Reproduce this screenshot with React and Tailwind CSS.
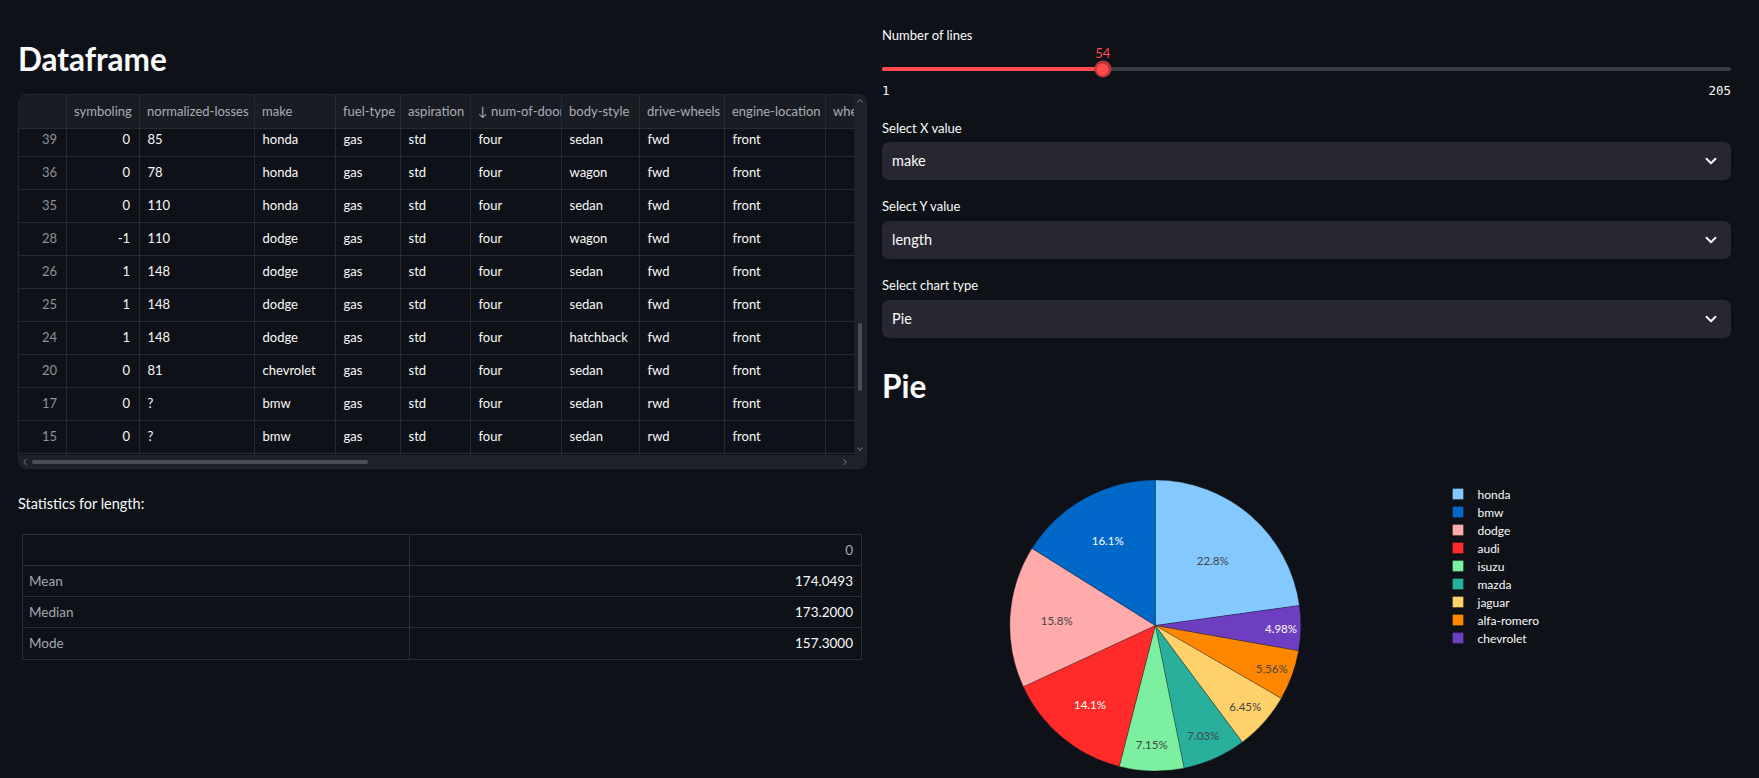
import React from "react";
import { ChevronDown, ChevronUp, ChevronLeft, ChevronRight } from "lucide-react";

const cols = [
  { label: "", w: "w-[48px]", num: true },
  { label: "symboling", w: "w-[73px]", num: true },
  { label: "normalized-losses", w: "w-[115px]" },
  { label: "make", w: "w-[81px]" },
  { label: "fuel-type", w: "w-[65px]" },
  { label: "aspiration", w: "w-[70px]" },
  { label: "↓ num-of-doors", w: "w-[91px]" },
  { label: "body-style", w: "w-[78px]" },
  { label: "drive-wheels", w: "w-[85px]" },
  { label: "engine-location", w: "w-[101px]" },
  { label: "wheel-base", w: "w-[100px]" },
];

const rows = [
  ["39", "0", "85", "honda", "gas", "std", "four", "sedan", "fwd", "front", ""],
  ["36", "0", "78", "honda", "gas", "std", "four", "wagon", "fwd", "front", ""],
  ["35", "0", "110", "honda", "gas", "std", "four", "sedan", "fwd", "front", ""],
  ["28", "-1", "110", "dodge", "gas", "std", "four", "wagon", "fwd", "front", ""],
  ["26", "1", "148", "dodge", "gas", "std", "four", "sedan", "fwd", "front", ""],
  ["25", "1", "148", "dodge", "gas", "std", "four", "sedan", "fwd", "front", ""],
  ["24", "1", "148", "dodge", "gas", "std", "four", "hatchback", "fwd", "front", ""],
  ["20", "0", "81", "chevrolet", "gas", "std", "four", "sedan", "fwd", "front", ""],
  ["17", "0", "?", "bmw", "gas", "std", "four", "sedan", "rwd", "front", ""],
  ["15", "0", "?", "bmw", "gas", "std", "four", "sedan", "rwd", "front", ""],
  ["", "", "", "", "", "", "", "", "", "", ""],
];

const slices = [
  { name: "honda", v: 22.8, c: "#83c9ff", t: "#444", p: [330.7, 154.3], label: "22.8%" },
  { name: "chevrolet", v: 4.98, c: "#6d3fc0", t: "#ffffff", p: [399, 222], label: "4.98%" },
  { name: "alfa-romero", v: 5.56, c: "#ff8700", t: "#444", p: [389.7, 262.3], label: "5.56%" },
  { name: "jaguar", v: 6.45, c: "#ffd16a", t: "#444", p: [363.3, 300.3], label: "6.45%" },
  { name: "mazda", v: 7.03, c: "#29b09d", t: "#444", p: [321.3, 329.7], label: "7.03%" },
  { name: "isuzu", v: 7.15, c: "#7defa1", t: "#444", p: [269.7, 338.7], label: "7.15%" },
  { name: "audi", v: 14.1, c: "#ff2b2b", t: "#ffffff", p: [208, 298.7], label: "14.1%" },
  { name: "dodge", v: 15.8, c: "#ffabab", t: "#444", p: [174.7, 214.3], label: "15.8%" },
  { name: "bmw", v: 16.1, c: "#0068c9", t: "#ffffff", p: [225.7, 134.7], label: "16.1%" },
];

const legend = ["honda", "bmw", "dodge", "audi", "isuzu", "mazda", "jaguar", "alfa-romero", "chevrolet"];

function PieChart() {
  const cx = 273.3;
  const cy = 219.5;
  const r = 145.5;
  const total = slices.reduce((s, x) => s + x.v, 0);
  let acc = 0;
  const paths = slices.map((s) => {
    const a0 = (acc / total) * Math.PI * 2;
    acc += s.v;
    const a1 = (acc / total) * Math.PI * 2;
    const x0 = cx + r * Math.sin(a0);
    const y0 = cy - r * Math.cos(a0);
    const x1 = cx + r * Math.sin(a1);
    const y1 = cy - r * Math.cos(a1);
    const large = a1 - a0 > Math.PI ? 1 : 0;
    return {
      ...s,
      d: `M ${cx} ${cy} L ${x0} ${y0} A ${r} ${r} 0 ${large} 1 ${x1} ${y1} Z`,
    };
  });
  const colorOf = Object.fromEntries(slices.map((s) => [s.name, s.c]));
  return (
    <svg width="849" height="372" className="block">
      {paths.map((s) => (
        <path key={s.name} d={s.d} fill={s.c} stroke="#0e1117" strokeWidth="0.6" strokeOpacity="0.5" />
      ))}
      {paths.map((s) => (
        <text
          key={s.name + "t"}
          x={s.p[0]}
          y={s.p[1]}
          fill={s.t}
          fontSize="11.5"
          fontFamily="Lato, 'Noto Sans', sans-serif"
          textAnchor="middle"
          dominantBaseline="central"
        >
          {s.label}
        </text>
      ))}
      {legend.map((n, i) => (
        <g key={n}>
          <rect x="570.5" y={82.5 + i * 18} width="11" height="11" fill={colorOf[n]} stroke="#0e1117" strokeOpacity="0.4" strokeWidth="0.8" />
          <text
            x="595.5"
            y={88 + i * 18}
            fill="#fafafa"
            fontSize="12"
            fontFamily="Lato, 'Noto Sans', sans-serif"
            dominantBaseline="central"
          >
            {n}
          </text>
        </g>
      ))}
    </svg>
  );
}

function Select({ label, value, mt, boxMt }) {
  return (
    <>
      <div className={`${mt} h-[20px] leading-[20px] text-[13px] text-[#fafafa]`}>{label}</div>
      <div className={`${boxMt} h-[38px] rounded-[7px] bg-[#262730] flex items-center justify-between pl-[10px] pr-[11px]`}>
        <span className="text-[14.5px] text-[#fafafa]">{value}</span>
        <ChevronDown size={18} strokeWidth={2.5} color="#fafafa" />
      </div>
    </>
  );
}

function DataTable() {
  return (
    <div className="mt-[15px] w-[849px] h-[375px] rounded-[8px] border border-[#23262d] overflow-hidden flex bg-[#0e1117]">
      <div className="w-[835px] flex flex-col">
        <div className="flex-1 overflow-hidden flex flex-col">
          <div className="flex h-[34px] shrink-0 bg-[#1a1c24] border-b border-[#272a31]">
            {cols.map((c, i) => (
              <div
                key={i}
                className={`${c.w} shrink-0 h-full border-r border-[#272a31] pl-[7px] flex items-center text-[13px] text-[#a9adb7] whitespace-nowrap overflow-hidden`}
              >
                {c.label}
              </div>
            ))}
          </div>
          <div className="flex-1 overflow-hidden">
            <div className="-mt-[5px]">
              {rows.map((r, ri) => (
                <div key={ri} className="flex h-[33px] border-b border-[#272a31]">
                  {r.map((v, ci) => (
                    <div
                      key={ci}
                      className={`${cols[ci].w} shrink-0 h-full border-r border-[#272a31] flex items-center text-[13px] whitespace-nowrap overflow-hidden ${
                        cols[ci].num ? "justify-end pr-[9px]" : "pl-[7.5px]"
                      } ${ci === 0 ? "text-[#8e929c]" : "text-[#fafafa]"}`}
                    >
                      {v}
                    </div>
                  ))}
                </div>
              ))}
            </div>
          </div>
        </div>
        <div className="h-[13px] shrink-0 bg-[#1f212a] flex items-center pl-[1px] pr-[4px]">
          <ChevronLeft size={10} strokeWidth={2.5} color="#6d707b" />
          <div className="ml-[2px] w-[336px] h-[4px] rounded-full bg-[#4a4c58]" />
          <div className="flex-1" />
          <ChevronRight size={10} strokeWidth={2.5} color="#6d707b" />
        </div>
      </div>
      <div className="w-[12px] bg-[#1f212a] flex flex-col items-center pt-[1px] pb-[14px]">
        <ChevronUp size={10} strokeWidth={2.5} color="#6d707b" />
        <div className="mt-[217px] w-[4px] h-[68px] rounded-full bg-[#4a4c58]" />
        <div className="flex-1" />
        <ChevronDown size={10} strokeWidth={2.5} color="#6d707b" />
      </div>
    </div>
  );
}

function Stats() {
  const data = [
    ["Mean", "174.0493"],
    ["Median", "173.2000"],
    ["Mode", "157.3000"],
  ];
  return (
    <div className="mt-[20px] ml-[4px] w-[840px] border border-[#2c2f36] text-[13.5px]">
      <div className="flex h-[31px] border-b border-[#2c2f36]">
        <div className="w-[387px] border-r border-[#2c2f36]" />
        <div className="flex-1 flex items-center justify-end pr-[8px] text-[#a3a8b4]">0</div>
      </div>
      {data.map(([k, v], i) => (
        <div key={k} className={`flex h-[31px] ${i < 2 ? "border-b border-[#2c2f36]" : ""}`}>
          <div className="w-[387px] border-r border-[#2c2f36] flex items-center pl-[6px] text-[#a3a8b4]">{k}</div>
          <div className="flex-1 flex items-center justify-end pr-[8px] text-[#fafafa]">{v}</div>
        </div>
      ))}
    </div>
  );
}

export default function App() {
  return (
    <div className="w-[1759px] h-[778px] overflow-hidden bg-[#0e1117] flex gap-[15px] pl-[18px] font-['Lato','Noto_Sans',sans-serif] text-[#fafafa]">
      <div className="w-[849px] shrink-0 flex flex-col pt-[39px]">
        <div className="h-[40px] leading-[40px] text-[31.5px] font-bold text-[#fafafa]">Dataframe</div>
        <DataTable />
        <div className="mt-[25px] h-[20px] leading-[20px] text-[14.5px] text-[#fafafa]">Statistics for length:</div>
        <Stats />
      </div>
      <div className="w-[849px] shrink-0 flex flex-col pt-[25px]">
        <div className="h-[20px] leading-[20px] text-[13px] text-[#fafafa]">Number of lines</div>
        <div className="flex flex-col">
          <div className="relative h-[16px]">
            <div className="absolute left-[26%] top-0 -translate-x-1/2 text-[13px] leading-[16px] text-[#ff4b4b]">54</div>
          </div>
          <div className="relative mt-[6px] h-[4px] rounded-full bg-[#3b3d45]">
            <div className="h-full w-[26%] rounded-full bg-[#ff4b4b]" />
            <div className="absolute left-[26%] top-1/2 -translate-x-1/2 -translate-y-1/2 w-[17px] h-[17px] rounded-full bg-[#b8353b] flex items-center justify-center">
              <div className="w-[12px] h-[12px] rounded-full bg-[#ff4b4b]" />
            </div>
          </div>
          <div className="mt-[12px] h-[16px] flex justify-between font-['DejaVu_Sans_Mono',monospace] text-[12.5px] leading-[16px] text-[#fafafa]">
            <span>1</span>
            <span>205</span>
          </div>
        </div>
        <Select label="Select X value" value="make" mt="mt-[19px]" boxMt="mt-[4px]" />
        <Select label="Select Y value" value="length" mt="mt-[16px]" boxMt="mt-[5px]" />
        <Select label="Select chart type" value="Pie" mt="mt-[16px]" boxMt="mt-[5px]" />
        <div className="mt-[28px] h-[40px] leading-[40px] text-[31.5px] font-bold text-[#fafafa]">Pie</div>
        <PieChart />
      </div>
    </div>
  );
}
